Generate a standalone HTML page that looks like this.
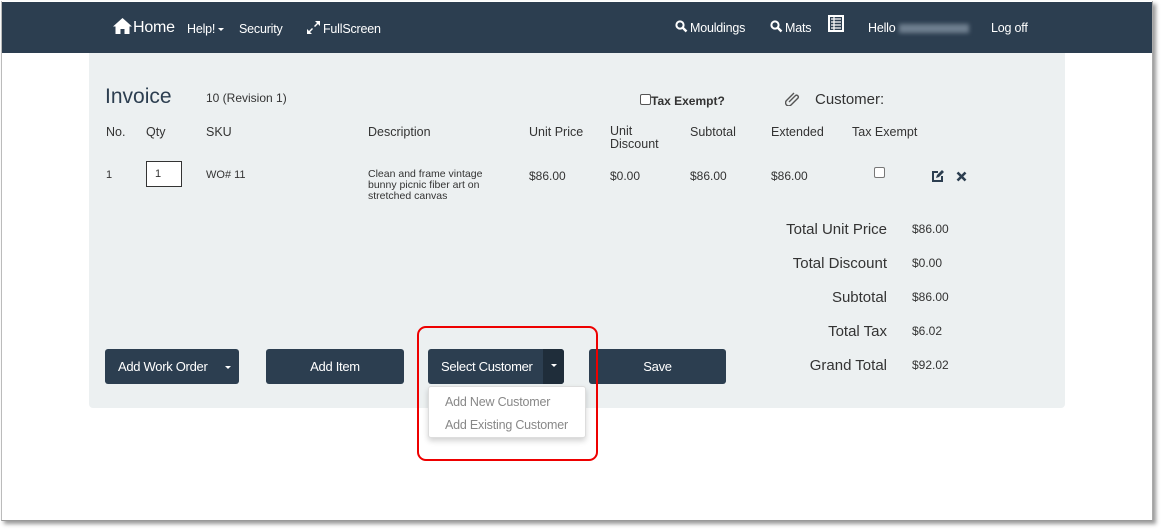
<!DOCTYPE html>
<html><head><style>
*{margin:0;padding:0;box-sizing:border-box}
body{width:1164px;height:532px;background:#fff;font-family:"Liberation Sans",Arial,sans-serif;position:relative;overflow:hidden;color:#333}
.a{position:absolute;white-space:nowrap}
.frame{position:absolute;left:1px;top:1px;width:1152px;height:520px;border-left:1px solid #bbb;border-right:1px solid #aaa;border-bottom:1px solid #999;box-shadow:3px 3px 4px #999}
.nav{position:absolute;left:2px;top:2px;width:1150px;height:51px;background:#2c3e50;color:#fff;font-size:12.5px;letter-spacing:-0.2px}
.panel{position:absolute;left:89px;top:53px;width:976px;height:355px;background:#ecf0f1;border-radius:0 0 4px 4px}
.btn{position:absolute;top:349px;height:35px;background:#2c3e50;color:#fff;font-size:13px;letter-spacing:-0.3px;border-radius:3px;text-align:center;line-height:35px}
.th{font-size:12.5px;color:#333}
.td{font-size:12px;color:#333}
.tot{font-size:15px;color:#333;text-align:right;width:200px}
.val{font-size:12px}
.caret{display:inline-block;border-left:3px solid transparent;border-right:3px solid transparent;border-top:3px solid #fff;vertical-align:middle}
</style></head><body>
<div class="frame"></div>
<div class="nav">
 <svg class="a" style="left:111px;top:16px" width="19" height="16" viewBox="0 0 19 16"><path d="M9.5 0L0 8.5h2.5V16h5v-5h4v5h5V8.5H19z" fill="#fff"/></svg>
 <div class="a" style="left:131px;top:17px;font-size:16px">Home</div>
 <div class="a" style="left:185px;top:20px">Help! <span class="caret"></span></div>
 <div class="a" style="left:237px;top:20px">Security</div>
 <svg class="a" style="left:305px;top:19px" width="13" height="13" viewBox="0 0 13 13"><path d="M8 0h5v5L11 3 8 6 7 5l3-3zM0 13V8l2 2 3-3 1 1-3 3 2 2z" fill="#fff"/></svg>
 <div class="a" style="left:321px;top:20px">FullScreen</div>
 <svg class="a" style="left:673px;top:18px" width="13" height="13" viewBox="0 0 13 13"><circle cx="5" cy="5" r="3.6" stroke="#fff" stroke-width="2" fill="none"/><path d="M7.5 7.5l4 4" stroke="#fff" stroke-width="2.4"/></svg>
 <div class="a" style="left:688px;top:19px">Mouldings</div>
 <svg class="a" style="left:768px;top:18px" width="13" height="13" viewBox="0 0 13 13"><circle cx="5" cy="5" r="3.6" stroke="#fff" stroke-width="2" fill="none"/><path d="M7.5 7.5l4 4" stroke="#fff" stroke-width="2.4"/></svg>
 <div class="a" style="left:783px;top:19px">Mats</div>
 <svg class="a" style="left:825px;top:12px" width="18" height="19" viewBox="0 0 18 19"><rect x="1" y="1" width="16" height="17" fill="#fff"/><rect x="3" y="3" width="12" height="13" fill="#2c3e50"/><path d="M4 5h10M4 8h10M4 11h10M4 14h10M7 3v13" stroke="#fff" stroke-width="1.2"/></svg>
 <div class="a" style="left:866px;top:19px">Hello</div>
 <div class="a" style="left:897px;top:22px;width:70px;height:9px;background:#6f7f8f;filter:blur(2px)"></div>
 <div class="a" style="left:989px;top:19px">Log off</div>
</div>
<div class="panel"></div>
<div class="a" style="left:105px;top:85px;font-size:21px;color:#2c3e50">Invoice</div>
<div class="a" style="left:206px;top:91px;font-size:12px">10 (Revision 1)</div>
<div class="a" style="left:640px;top:94px;width:11px;height:11px;border:1px solid #555;border-radius:2px;background:#fff"></div>
<div class="a" style="left:651px;top:94px;font-size:12px;font-weight:bold">Tax Exempt?</div>
<svg class="a" style="left:785px;top:91px" width="15" height="15" viewBox="0 0 15 15"><path d="M4 11L10.5 4.5a1.8 1.8 0 0 1 2.5 2.5L6 14a3 3 0 0 1-4.5-4.5L9 2" stroke="#555" stroke-width="1.4" fill="none"/></svg>
<div class="a" style="left:815px;top:91px;font-size:15px">Customer:</div>
<div class="a th" style="left:106px;top:125px">No.</div>
<div class="a th" style="left:146px;top:125px">Qty</div>
<div class="a th" style="left:206px;top:125px">SKU</div>
<div class="a th" style="left:368px;top:125px">Description</div>
<div class="a th" style="left:529px;top:125px">Unit Price</div>
<div class="a th" style="left:610px;top:125px;line-height:13px">Unit<br>Discount</div>
<div class="a th" style="left:690px;top:125px">Subtotal</div>
<div class="a th" style="left:771px;top:125px">Extended</div>
<div class="a th" style="left:852px;top:125px">Tax Exempt</div>
<div class="a td" style="left:106px;top:169px;font-size:11px">1</div>
<div class="a" style="left:146px;top:161px;width:36px;height:26px;border:1px solid #333;background:#fff;font-size:11px;padding:6px 0 0 8px">1</div>
<div class="a td" style="left:206px;top:169px;font-size:11px">WO# 11</div>
<div class="a" style="left:368px;top:169px;font-size:10.5px;line-height:11px;white-space:normal;width:125px">Clean and frame vintage bunny picnic fiber art on stretched canvas</div>
<div class="a td" style="left:529px;top:169px">$86.00</div>
<div class="a td" style="left:610px;top:169px">$0.00</div>
<div class="a td" style="left:690px;top:169px">$86.00</div>
<div class="a td" style="left:771px;top:169px">$86.00</div>
<div class="a" style="left:874px;top:167px;width:11px;height:11px;border:1px solid #777;border-radius:2px;background:#fff"></div>
<svg class="a" style="left:931px;top:170px" width="13" height="12" viewBox="0 0 13 12"><path d="M7 2H2v9h9V6" stroke="#2c3e50" stroke-width="2" fill="none"/><path d="M5 8l1-3 5-5 2 2-5 5z" fill="#2c3e50"/></svg>
<svg class="a" style="left:956px;top:171px" width="11" height="11" viewBox="0 0 11 11"><path d="M1.5 1.5l8 8M9.5 1.5l-8 8" stroke="#2c3e50" stroke-width="2.6"/></svg>
<div class="a tot" style="left:687px;top:221px">Total Unit Price</div><div class="a val" style="left:912px;top:222px">$86.00</div>
<div class="a tot" style="left:687px;top:255px">Total Discount</div><div class="a val" style="left:912px;top:256px">$0.00</div>
<div class="a tot" style="left:687px;top:289px">Subtotal</div><div class="a val" style="left:912px;top:290px">$86.00</div>
<div class="a tot" style="left:687px;top:323px">Total Tax</div><div class="a val" style="left:912px;top:324px">$6.02</div>
<div class="a tot" style="left:687px;top:357px">Grand Total</div><div class="a val" style="left:912px;top:358px">$92.02</div>
<div class="btn" style="left:105px;width:134px;text-align:left;padding-left:13px">Add Work Order <span class="caret" style="margin-left:14px"></span></div>
<div class="btn" style="left:266px;width:138px">Add Item</div>
<div class="btn" style="left:428px;width:136px;text-align:left;padding-left:13px">Select Customer</div>
<div class="a" style="left:543px;top:349px;width:21px;height:35px;background:#1f2d3a;border-radius:0 3px 3px 0;text-align:center;line-height:33px"><span class="caret"></span></div>
<div class="btn" style="left:589px;width:137px">Save</div>
<div class="a" style="left:428px;top:386px;width:158px;height:52px;background:#fff;border:1px solid #ddd;border-radius:3px;box-shadow:0 3px 6px rgba(0,0,0,.18)"></div>
<div class="a" style="left:445px;top:395px;font-size:12.5px;letter-spacing:-0.2px;color:#888">Add New Customer</div>
<div class="a" style="left:445px;top:418px;font-size:12.5px;letter-spacing:-0.2px;color:#888">Add Existing Customer</div>
<div class="a" style="left:417px;top:326px;width:181px;height:135px;border:2px solid #e00;border-radius:9px"></div>
</body></html>
